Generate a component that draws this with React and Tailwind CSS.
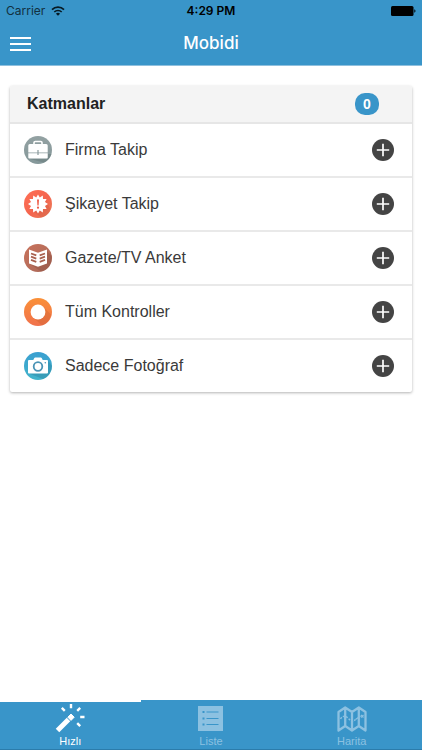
import { useState } from 'react'

function BriefcaseIcon() {
  return (
    <svg viewBox="0 0 28 28" className="size-7" aria-hidden="true">
      <defs>
        <linearGradient id="gray" x1="0" y1="0" x2="0" y2="1">
          <stop offset="0" stopColor="#93a1a2" />
          <stop offset="1" stopColor="#85989a" />
        </linearGradient>
      </defs>
      <circle cx="14" cy="14" r="14" fill="url(#gray)" />
      <path d="M4 22.500H24V18L27.500 18A14 14 0 0 1 20 26.500Z" fill="#6f8183" opacity=".7" />
      <path d="M10 9V6.800a1.300 1.300 0 0 1 1.300-1.300h5.400A1.300 1.300 0 0 1 18 6.800V9" fill="none" stroke="#fff" strokeWidth="1.600" />
      <path d="M5.800 8H22.200a1.500 1.500 0 0 1 1.500 1.500V16.500H14.600V14H13.400V16.500H4.300V9.500a1.500 1.500 0 0 1 1.500-1.500Z" fill="#fff" />
      <path d="M4.300 17.300H13.400V19H14.600V17.300H23.700V21.500a1 1 0 0 1-1 1H5.300a1 1 0 0 1-1-1Z" fill="#fff" />
    </svg>
  )
}

function AlertIcon() {
  return (
    <svg viewBox="0 0 28 28" className="size-7" aria-hidden="true">
      <defs>
        <linearGradient id="red" x1="0" y1="0" x2="1" y2="1">
          <stop offset="0" stopColor="#ff6f55" />
          <stop offset=".55" stopColor="#f4654e" />
          <stop offset="1" stopColor="#e9825c" />
        </linearGradient>
      </defs>
      <circle cx="14" cy="14" r="14" fill="url(#red)" />
      <path d="M21 9L26.500 19.500A14 14 0 0 1 17 27.600L8 20Z" fill="#c94f3c" opacity=".3" />
      <path
        d="M14 4.500L15.800 7.600L18.800 5.500L19 9.100L22.600 8.900L21 12.100L24 14L21 15.900L22.600 19.100L19 18.900L18.800 22.500L15.800 20.400L14 23.500L12.200 20.400L9.200 22.500L9 18.900L5.400 19.100L7 15.900L4 14L7 12.100L5.400 8.900L9 9.100L9.200 5.500L12.200 7.600Z"
        fill="#fff"
      />
      <path d="M13 9.500H15L14.600 15.500H13.400Z" fill="#ef5a45" />
      <circle cx="14" cy="17.700" r="1.100" fill="#ef5a45" />
    </svg>
  )
}

function NewspaperIcon() {
  return (
    <svg viewBox="0 0 28 28" className="size-7" aria-hidden="true">
      <defs>
        <linearGradient id="brown" x1="0" y1="0" x2="1" y2="1">
          <stop offset="0" stopColor="#c9725b" />
          <stop offset="1" stopColor="#a8695a" />
        </linearGradient>
      </defs>
      <circle cx="14" cy="14" r="14" fill="url(#brown)" />
      <path d="M23 7L27.800 12A14 14 0 0 1 17 27.600L6 20Z" fill="#874a3d" opacity=".35" />
      <path d="M5 5.500L14 8.700L23 5.500V19.500L14 22.700L5 19.500Z" fill="#fff" />
      <path
        d="M7 9.500L12.300 11.400M7 12.700L12.300 14.600M7 15.900L12.300 17.800M21 9.500L15.700 11.400M21 12.700L15.700 14.600M21 15.900L15.700 17.800"
        stroke="#a9604f"
        strokeWidth="1.800"
      />
    </svg>
  )
}

function RingIcon() {
  return (
    <svg viewBox="0 0 28 28" className="size-7" aria-hidden="true">
      <defs>
        <linearGradient id="orange" x1="0" y1="0" x2="0" y2="1">
          <stop offset="0" stopColor="#fa9038" />
          <stop offset="1" stopColor="#f0714c" />
        </linearGradient>
      </defs>
      <circle cx="14" cy="14" r="14" fill="url(#orange)" />
      <path d="M19.200 8.800L27 16.500A14 14 0 0 1 18 27.400L8.800 19.200Z" fill="#c9602f" opacity=".35" />
      <circle cx="14" cy="14" r="7.400" fill="#fff" />
    </svg>
  )
}

function CameraIcon() {
  return (
    <svg viewBox="0 0 28 28" className="size-7" aria-hidden="true">
      <defs>
        <linearGradient id="blue" x1="0" y1="0" x2="0" y2="1">
          <stop offset="0" stopColor="#3a9fd0" />
          <stop offset="1" stopColor="#42b4cb" />
        </linearGradient>
      </defs>
      <circle cx="14" cy="14" r="14" fill="url(#blue)" />
      <path d="M24 8.500L28 14A14 14 0 0 1 19 27L5 21.500Z" fill="#2a7f9c" opacity=".4" />
      <path
        d="M5 8H9.300L10.300 6a1 1 0 0 1 .9-.5H16.800a1 1 0 0 1 .9.500L18.700 8H23a1 1 0 0 1 1 1V20.500a1 1 0 0 1-1 1H5a1 1 0 0 1-1-1V9a1 1 0 0 1 1-1Z"
        fill="#fff"
      />
      <circle cx="14" cy="14.500" r="4.300" fill="none" stroke="#4a93b5" strokeWidth="1.800" />
      <circle cx="21.300" cy="10.800" r=".8" fill="#4a93b5" />
    </svg>
  )
}

function WandIcon() {
  return (
    <svg viewBox="0 0 30 30" className="size-[30px]" fill="none" stroke="#fff" aria-hidden="true">
      <path d="M2.500 26.500L13.500 15.500" strokeWidth="5" />
      <path d="M16 10L19.200 13.200L16 16.400L12.800 13.200Z" fill="#fff" strokeWidth="1" />
      <path d="M16 0V4.200M25.200 13H29.500M6.800 3.800L9.800 6.800M25.200 3.800L22.200 6.800M22.200 19.200L25.200 22.200" strokeWidth="2.400" />
    </svg>
  )
}

function ListIcon() {
  return (
    <svg viewBox="0 0 25 25" className="size-[25px]" aria-hidden="true">
      <rect width="25" height="25" fill="#8cc1e1" />
      <path d="M4.500 6H6.500M4.500 12.500H6.500M4.500 18.500H6.500" stroke="#3995c9" strokeWidth="2" />
      <path d="M8.500 6H20.500M8.500 12.500H20.500M8.500 18.500H20.500" stroke="#3995c9" strokeWidth="1.200" />
    </svg>
  )
}

function MapIcon() {
  return (
    <svg viewBox="0 0 30 26" className="h-[26px] w-[30px]" fill="none" stroke="#8cc1e1" aria-hidden="true">
      <path
        d="M1.500 6L8.200 1.500L15 6L21.800 1.500L28.500 6V24.500L21.800 20L15 24.500L8.200 20L1.500 24.500ZM8.200 1.500V20M15 6V24.500M21.800 1.500V20"
        strokeWidth="2.300"
        strokeLinejoin="round"
      />
      <path d="M3.500 13C6 9 9 10 11 12S15 17 18.500 13.500" strokeWidth="1.400" strokeDasharray="2 1.300" />
      <path d="M18.500 13.500L23.500 10M24 9L26.500 11.500M26.500 9L24 11.500" strokeWidth="1.200" />
    </svg>
  )
}

const layers = [
  { name: 'Firma Takip', Icon: BriefcaseIcon },
  { name: 'Şikayet Takip', Icon: AlertIcon },
  { name: 'Gazete/TV Anket', Icon: NewspaperIcon },
  { name: 'Tüm Kontroller', Icon: RingIcon },
  { name: 'Sadece Fotoğraf', Icon: CameraIcon },
]

const tabs = [
  { name: 'Hızlı', Icon: WandIcon },
  { name: 'Liste', Icon: ListIcon },
  { name: 'Harita', Icon: MapIcon },
]

function StatusBar() {
  return (
    <div className="grid h-[22px] grid-cols-3 items-center px-[6px] font-[Inter,sans-serif] text-[12px] leading-4 text-black">
      <div className="flex items-center gap-[6px] text-[#12303f]">
        <span>Carrier</span>
        <svg viewBox="0 0 14 10" className="h-[10px] w-[14px]" fill="none" stroke="#071a24" aria-hidden="true">
          <path d="M1 3.700A8.500 8.500 0 0 1 13 3.700" strokeWidth="1.700" />
          <path d="M3.300 6A5.200 5.200 0 0 1 10.700 6" strokeWidth="1.600" />
          <path d="M7 9.800L4.900 7.700A3 3 0 0 1 9.100 7.700Z" fill="#071a24" stroke="none" />
        </svg>
      </div>
      <span className="text-center font-semibold">4:29 PM</span>
      <svg viewBox="0 0 25 10" className="h-[10px] w-[25px] justify-self-end" aria-hidden="true">
        <rect width="22.500" height="10" rx="1.500" />
        <path d="M23.300 3.300a1.800 1.800 0 0 1 0 3.400Z" />
      </svg>
    </div>
  )
}

export default function App() {
  const [active, setActive] = useState('Hızlı')
  const [selected, setSelected] = useState([])

  const toggle = (name) =>
    setSelected((s) => (s.includes(name) ? s.filter((n) => n !== name) : [...s, name]))

  return (
    <div className="flex min-h-screen flex-col bg-white font-['Liberation_Sans',Arial,sans-serif]">
      <header className="border-b border-[#8fc0de] bg-[#3995c9]">
        <StatusBar />
        <div className="grid h-[43px] grid-cols-[1fr_auto_1fr] items-center px-[10px]">
          <button type="button" aria-label="Menu" className="flex w-[21px] flex-col gap-1">
            <span className="h-[2px] bg-white" />
            <span className="h-[2px] bg-white" />
            <span className="h-[2px] bg-white" />
          </button>
          <h1 className="font-[Inter,sans-serif] text-[17px] font-medium text-white">Mobidi</h1>
        </div>
      </header>

      <main className="flex-1 px-[10px] pt-5">
        <section className="rounded-[2px] bg-white shadow-[0_1px_3px_rgba(0,0,0,0.3)]">
          <div className="flex h-[38px] items-center justify-between rounded-t-[2px] border-b-2 border-[#e6e6e6] bg-[#f4f4f4] pr-[33px] pl-[17px]">
            <h2 className="text-[16px] font-bold text-[#222]">Katmanlar</h2>
            <span className="flex h-[22px] w-6 items-center justify-center rounded-[10px] bg-[#3995c9] text-[14px] font-bold text-white">
              {selected.length}
            </span>
          </div>
          <ul className="divide-y-2 divide-[#e9e9e9]">
            {layers.map(({ name, Icon }) => (
              <li key={name} className="flex h-[54px] items-center pr-[18px] pl-[14px] last:h-[52px]">
                <Icon />
                <span className="ml-[13px] flex-1 text-[16px] text-[#3a3a3a]">{name}</span>
                <button type="button" aria-label={name} onClick={() => toggle(name)}>
                  <svg viewBox="0 0 22 22" className="size-[22px]" aria-hidden="true">
                    <circle cx="11" cy="11" r="11" fill="#444" />
                    <path d="M11 4.800V17.200M4.800 11H17.200" stroke="#fff" strokeWidth="1.700" />
                  </svg>
                </button>
              </li>
            ))}
          </ul>
        </section>
      </main>

      <nav className="sticky bottom-0 grid h-[50px] grid-cols-3 border-b border-[#2b7cab] bg-[#3995c9]">
        {tabs.map(({ name, Icon }) => (
          <button
            key={name}
            type="button"
            onClick={() => setActive(name)}
            className={`flex flex-col items-center border-t-2 text-[11px] leading-3 ${
              active === name ? 'border-white text-white' : 'border-[#3995c9] text-[#8cc1e1]'
            }`}
          >
            <span className="flex h-[33px] items-center">
              <Icon />
            </span>
            {name}
          </button>
        ))}
      </nav>
    </div>
  )
}
